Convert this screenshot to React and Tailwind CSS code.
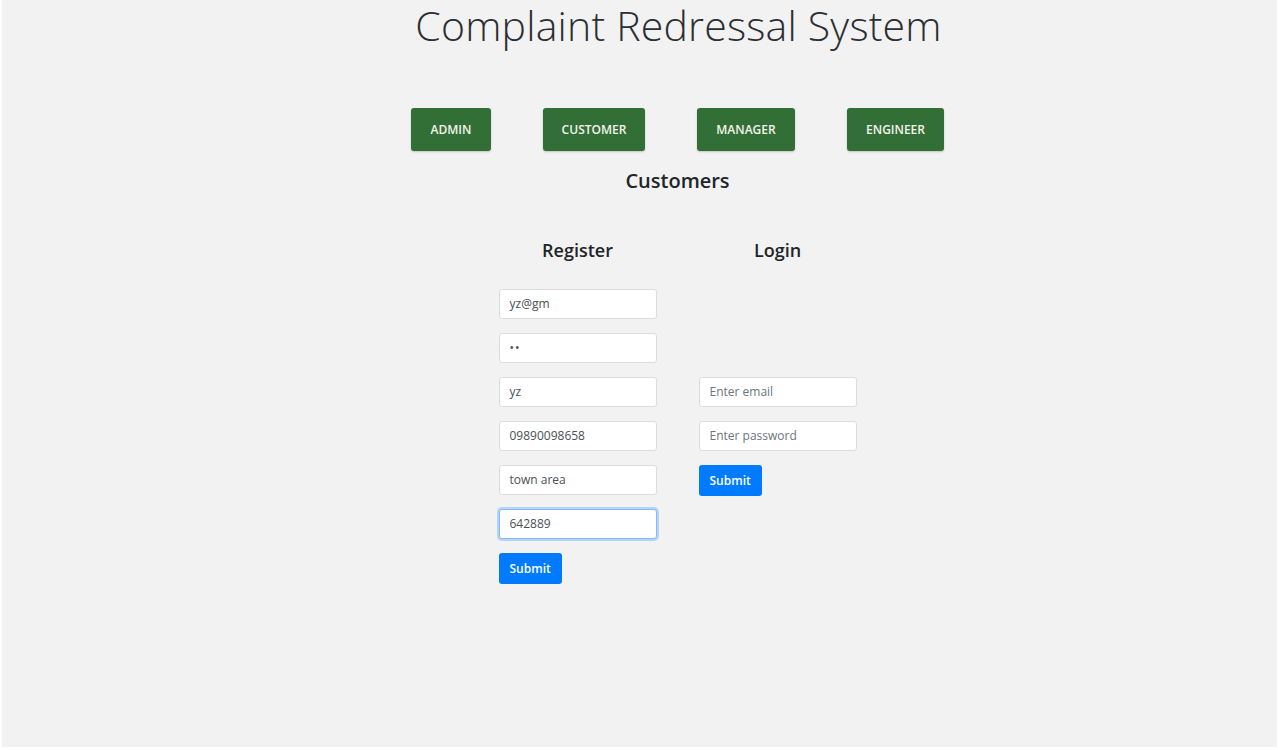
import React from 'react'

const ROLES = [
  { label: 'ADMIN', w: 'w-[80px]' },
  { label: 'CUSTOMER', w: 'w-[102px]' },
  { label: 'MANAGER', w: 'w-[98px]' },
  { label: 'ENGINEER', w: 'w-[97px]' },
]

const REGISTER = [
  { value: 'yz@gm' },
  { value: '••', pwd: true },
  { value: 'yz' },
  { value: '09890098658' },
  { value: 'town area' },
  { value: '642889', focus: true },
]

function Field({ value, placeholder, focus, pwd }) {
  return (
    <div
      className={`w-[158px] h-[30px] bg-white rounded-[3px] border flex items-center px-[10px] text-[12px] ${
        focus ? 'border-[#80bdff] shadow-[0_0_0_2px_rgba(0,123,255,0.25)]' : 'border-[#dcdcdc]'
      } ${value ? 'text-[#495057]' : 'text-[#6c757d]'} ${pwd ? 'tracking-[1px]' : ''}`}
    >
      {value || placeholder}
    </div>
  )
}

function SubmitBtn() {
  return (
    <button className="h-[31px] px-[11px] bg-[#007bff] text-white text-[12px] font-semibold rounded-[3px]">
      Submit
    </button>
  )
}

export default function App() {
  return (
    <div className="w-[1280px] h-[750px] bg-white pl-[2px] pr-[3px] pb-[3px]" style={{ fontFamily: '"Open Sans", "Noto Sans", sans-serif' }}>
      <div className="h-full bg-[#f2f2f2] flex flex-col items-center pl-[78px] text-[#212529]">
        <h1 className="text-[41px] leading-[50px] font-light text-[#2b2f33] tracking-[0.2px]">Complaint Redressal System</h1>

        <div className="mt-[58px] flex gap-[52px] ml-[-2px]">
          {ROLES.map(r => (
            <button key={r.label} className={`${r.w} h-[43px] bg-[#326f37] text-[#f4f4ea] text-[12px] font-semibold rounded-[3px] shadow-[0_1px_2px_rgba(0,0,0,0.2)]`}>
              {r.label}
            </button>
          ))}
        </div>

        <h2 className="mt-[15px] text-[20px] font-semibold text-[#212529] ml-[-2px]">Customers</h2>

        <div className="mt-[40px] flex ml-[-2px]">
          <div className="w-[200px] flex flex-col items-center">
            <h3 className="text-[18px] font-semibold leading-[28px]">Register</h3>
          </div>
          <div className="w-[200px] flex flex-col items-center">
            <h3 className="text-[18px] font-semibold leading-[28px]">Login</h3>
          </div>
        </div>

        <div className="mt-[25px] flex items-center ml-[-2px]">
          <div className="w-[200px] pl-[21px] flex flex-col gap-[14px]">
            {REGISTER.map((f, i) => <Field key={i} {...f} />)}
            <div><SubmitBtn /></div>
          </div>
          <div className="w-[200px] pl-[21px] flex flex-col gap-[14px]">
            <Field placeholder="Enter email" />
            <Field placeholder="Enter password" />
            <div><SubmitBtn /></div>
          </div>
        </div>
      </div>
    </div>
  )
}
